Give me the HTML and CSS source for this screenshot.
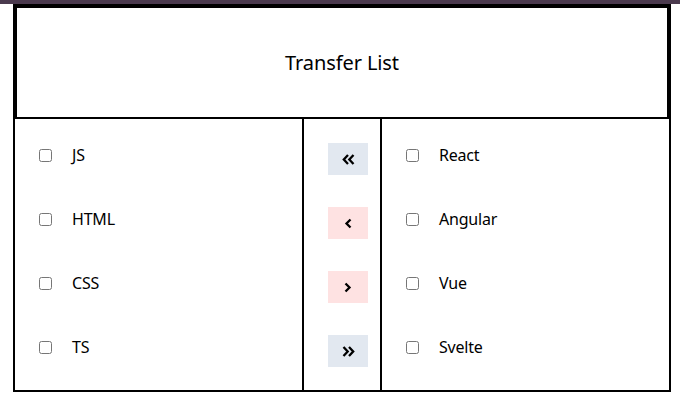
FILE: index.html
```html
<!DOCTYPE html>
<html>
<head>
<meta charset="utf-8">
<link rel="stylesheet" href="styles.css">
</head>
<body>
<div class="topbar"></div>
<div class="container">
  <div class="header">Transfer List</div>
  <div class="lists">
    <div class="list">
      <div class="row"><input type="checkbox"><span class="label">JS</span></div>
      <div class="row"><input type="checkbox"><span class="label">HTML</span></div>
      <div class="row"><input type="checkbox"><span class="label">CSS</span></div>
      <div class="row"><input type="checkbox"><span class="label">TS</span></div>
    </div>
    <div class="actions">
      <button class="btn btn-all">
        <svg class="icon" width="13" height="11" viewBox="0 0 13 11"><path d="M6 1 L1.8 5.5 L6 10 M11.5 1 L7.3 5.5 L11.5 10" fill="none" stroke="#000" stroke-width="2.3"/></svg>
      </button>
      <button class="btn btn-one">
        <svg class="icon" width="8" height="11" viewBox="0 0 8 11"><path d="M6.5 1.5 L2.5 5.5 L6.5 9.5" fill="none" stroke="#000" stroke-width="2.3"/></svg>
      </button>
      <button class="btn btn-one">
        <svg class="icon" width="8" height="11" viewBox="0 0 8 11"><path d="M1.5 1.5 L5.5 5.5 L1.5 9.5" fill="none" stroke="#000" stroke-width="2.3"/></svg>
      </button>
      <button class="btn btn-all">
        <svg class="icon" width="13" height="11" viewBox="0 0 13 11"><path d="M1.5 1 L5.7 5.5 L1.5 10 M7 1 L11.2 5.5 L7 10" fill="none" stroke="#000" stroke-width="2.3"/></svg>
      </button>
    </div>
    <div class="list">
      <div class="row"><input type="checkbox"><span class="label">React</span></div>
      <div class="row"><input type="checkbox"><span class="label">Angular</span></div>
      <div class="row"><input type="checkbox"><span class="label">Vue</span></div>
      <div class="row"><input type="checkbox"><span class="label">Svelte</span></div>
    </div>
  </div>
</div>
</body>
</html>
```
FILE: styles.css
```css
html, body {
  margin: 0;
  padding: 0;
  background: #fff;
}
body {
  font-family: "Noto Sans", "DejaVu Sans", sans-serif;
  color: #000;
}
.topbar {
  height: 4px;
  background: #4b3a4e;
}
.container {
  margin-left: 13px;
  width: 654px;
  border: 2px solid #000;
}
.header {
  height: 109px;
  border: 2px solid #000;
  display: flex;
  align-items: center;
  justify-content: center;
  font-size: 20px;
  letter-spacing: -0.1px;
}
.lists {
  display: flex;
}
.list {
  width: 287px;
  padding-top: 4px;
  padding-bottom: 11px;
  display: flex;
  flex-direction: column;
}
.row {
  height: 64px;
  display: flex;
  align-items: center;
  padding-left: 20px;
}
.row input {
  margin: 0 3px 0 4px;
  width: 13px;
  height: 13px;
}
.label {
  margin-left: 17px;
  font-size: 16px;
  letter-spacing: -0.2px;
}
.actions {
  border-left: 2px solid #000;
  border-right: 2px solid #000;
  padding: 24px 0 23px 24px;
  box-sizing: border-box;
  width: 80px;
  display: flex;
  flex-direction: column;
  gap: 32px;
}
.btn {
  width: 40px;
  height: 32px;
  border: none;
  padding: 0;
  display: flex;
  align-items: center;
  justify-content: center;
}
.icon {
  display: block;
}
.btn-all {
  background: #e2e8f0;
}
.btn-one {
  background: #fee2e2;
}
```
